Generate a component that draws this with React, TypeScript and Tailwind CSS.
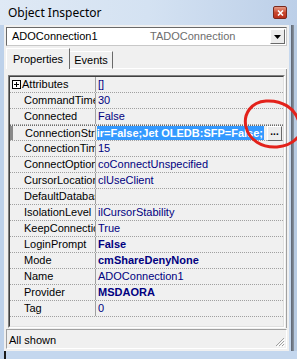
import React from "react";

type Row = { name: string; value: string; bold?: boolean; plus?: boolean; selected?: boolean };

const rows: Row[] = [
  { name: "Attributes", value: "[]", plus: true },
  { name: "CommandTimeout", value: "30" },
  { name: "Connected", value: "False" },
  { name: "ConnectionString", value: "Repair=False;Jet OLEDB:SFP=False;", selected: true },
  { name: "ConnectionTimeout", value: "15" },
  { name: "ConnectOptions", value: "coConnectUnspecified" },
  { name: "CursorLocation", value: "clUseClient" },
  { name: "DefaultDatabase", value: "" },
  { name: "IsolationLevel", value: "ilCursorStability" },
  { name: "KeepConnection", value: "True" },
  { name: "LoginPrompt", value: "False", bold: true },
  { name: "Mode", value: "cmShareDenyNone", bold: true },
  { name: "Name", value: "ADOConnection1" },
  { name: "Provider", value: "MSDAORA", bold: true },
  { name: "Tag", value: "0" },
];

function PlusBox() {
  return (
    <svg width="9" height="9" viewBox="0 0 9 9" className="shrink-0">
      <rect x="0.5" y="0.5" width="8" height="8" fill="#fff" stroke="#000" />
      <path d="M2 4.5h5M4.5 2v5" stroke="#000" />
    </svg>
  );
}

function PropRow({ row }: { row: Row }) {
  if (row.selected) {
    return (
      <div className="flex h-[16px] border-t border-t-[#696969] border-b border-dotted border-b-[#a0a0a0]">
        <div className="w-[86px] shrink-0 flex items-center pl-[12px] border-l-[3px] border-l-[#8a8a8a] border-r border-r-[#a0a0a0] overflow-hidden whitespace-nowrap">
          {row.name}
        </div>
        <div className="flex-1 flex items-center pl-[1px] pr-[1px] min-w-0">
          <div className="flex-1 h-[14px] bg-[#3399ff] text-white font-bold flex items-center justify-end overflow-hidden whitespace-nowrap min-w-0">
            <span className="pr-[1px]">{row.value}</span>
          </div>
          <div className="ml-[3px] w-[15px] h-[15px] bg-[#ececec] border border-t-white border-l-white border-r-[#696969] border-b-[#696969] flex items-center justify-center text-[10px] font-bold leading-none pb-[3px]">
            ...
          </div>
        </div>
      </div>
    );
  }
  return (
    <div className="flex h-[16px] border-b border-dotted border-b-[#a0a0a0]">
      <div
        className={
          row.plus
            ? "w-[86px] shrink-0 flex items-center gap-[1px] pl-[2px] border-r border-r-[#a0a0a0] overflow-hidden whitespace-nowrap"
            : "w-[86px] shrink-0 flex items-center pl-[14px] border-r border-r-[#a0a0a0] overflow-hidden whitespace-nowrap"
        }
      >
        {row.plus && <PlusBox />}
        {row.name}
      </div>
      <div
        className={
          row.bold
            ? "flex-1 flex items-center pl-[2px] text-[#000080] font-bold overflow-hidden whitespace-nowrap"
            : "flex-1 flex items-center pl-[2px] text-[#000080] overflow-hidden whitespace-nowrap"
        }
      >
        {row.value}
      </div>
    </div>
  );
}

export default function App() {
  return (
    <div className="relative w-[297px] h-[359px] overflow-hidden bg-[#c2d5ec] font-['Liberation_Sans',sans-serif] text-[11px] text-black">
      {/* title bar */}
      <div className="h-[25px] flex items-center justify-between pl-[8px] pr-[10px] bg-gradient-to-r from-[#dfe9f5] via-[#d4e2f2] to-[#bccfe8]">
        <span className="text-[12px] font-['Noto_Sans',sans-serif] pt-[1px]">Object Inspector</span>
        <div className="w-[14px] h-[13px] rounded-[2px] bg-gradient-to-b from-[#e59a87] via-[#c9482f] to-[#b9301c] border border-[#7a2a1e] flex items-center justify-center">
          <svg width="7" height="6" viewBox="0 0 7 6">
            <path d="M1 0.5l5 5M6 0.5l-5 5" stroke="#fff" strokeWidth="1.6" />
          </svg>
        </div>
      </div>

      <div className="flex h-[326px]">
        <div className="w-[4px] bg-[#bdd1ea]" />
        {/* client */}
        <div className="w-[285px] bg-[#f0f0f0] flex flex-col">
          {/* component selector */}
          <div className="mx-[2px] mt-[2px] h-[19px] bg-white border border-t-[#696969] border-l-[#696969] border-r-[#c8c8c8] border-b-[#c8c8c8] flex items-center">
            <span className="pl-[5px] w-[143px]">ADOConnection1</span>
            <span className="flex-1 text-[#6d6d6d]">TADOConnection</span>
            <div className="w-[15px] h-[15px] mr-[1px] bg-[#ececec] border border-t-white border-l-white border-r-[#696969] border-b-[#696969] flex items-center justify-center">
              <svg width="7" height="4" viewBox="0 0 7 4">
                <path d="M0 0h7L3.5 4z" fill="#000" />
              </svg>
            </div>
          </div>

          {/* tabs */}
          <div className="flex items-end h-[23px] mx-[2px]">
            <div className="w-[64px] h-[21px] border border-b-0 border-t-white border-l-white border-r-[#696969] flex items-center justify-center bg-[#f0f0f0]">
              Properties
            </div>
            <div className="w-[43px] h-[18px] border-r border-r-[#696969] border-t border-t-white flex items-center justify-center border-b border-b-white">
              Events
            </div>
            <div className="flex-1 border-b border-b-white" />
          </div>

          {/* tab page */}
          <div className="mx-[2px] h-[259px] border-r border-r-[#a0a0a0] flex flex-col pt-[6px] pl-[2px] pr-[1px]">
            <div className="flex-1 border border-t-[#808080] border-l-[#808080] border-r-white border-b-white">
              <div className="h-full border border-t-[#404040] border-l-[#404040] border-r-[#e0e0e0] border-b-[#e0e0e0] flex flex-col">
                {rows.map((r) => (
                  <PropRow key={r.name} row={r} />
                ))}
              </div>
            </div>
          </div>

          {/* status bar */}
          <div className="mt-[1px] mx-[2px] h-[20px] border border-t-[#a0a0a0] border-l-[#a0a0a0] border-r-white border-b-white flex items-center justify-between">
            <span className="pl-[2px] pt-[2px]">All shown</span>
            <svg width="11" height="11" viewBox="0 0 11 11" className="mr-[1px] self-end mb-[1px]">
              <path d="M10 2L2 10M10 5L5 10M10 8L8 10" stroke="#a0a0a0" />
              <path d="M11 3L3 11M11 6L6 11M11 9L9 11" stroke="#ffffff" />
            </svg>
          </div>
        </div>
        {/* right frame */}
        <div className="w-[8px] flex">
          <div className="w-[2px] bg-[#c6d8ee]" />
          <div className="w-[3px] bg-gradient-to-r from-[#5c6470] to-[#8c96a2]" />
          <div className="flex-1 bg-[#b8cbe2]" />
        </div>
      </div>
      <div className="h-[8px] flex">
        <div className="w-[4px] bg-[#bdd1ea]" />
        <div className="w-[2px] bg-[#1a1a1a]" />
        <div className="flex-1 bg-[#c4d7ee]" />
      </div>

      {/* red hand-drawn annotation */}
      <svg className="absolute left-0 top-0 pointer-events-none" width="297" height="359" viewBox="0 0 297 359">
        <path
          d="M299 122 C295 108 282 100 266 101 C251 102 243 114 246 127 C249 140 262 148 277 147 C288 146 296 141 301 133"
          fill="none"
          stroke="#e3221b"
          strokeWidth="3"
          strokeLinecap="round"
        />
      </svg>
    </div>
  );
}
